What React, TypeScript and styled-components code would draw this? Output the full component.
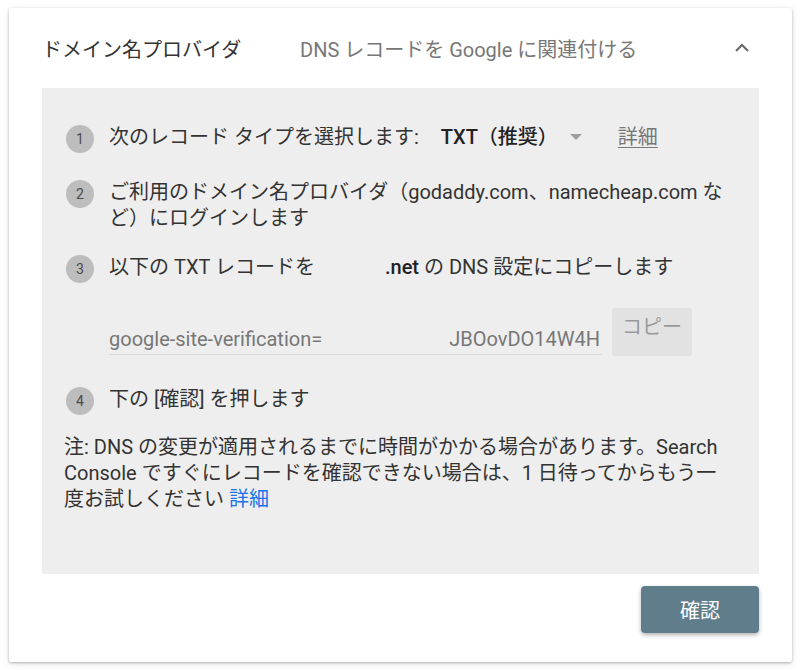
import styled, { createGlobalStyle } from "styled-components";

const GlobalStyle = createGlobalStyle`
  html, body {
    margin: 0;
    padding: 0;
    background: #ffffff;
  }
  body {
    font-family: Roboto, "Noto Sans CJK JP", sans-serif;
    color: #333333;
  }
`;

const Page = styled.div`
  padding: 8px 8px 8px 9px;
`;

const Card = styled.section`
  width: 783px;
  height: 654px;
  box-sizing: border-box;
  background: #ffffff;
  border-radius: 2px;
  box-shadow: 0 1px 3px rgba(0, 0, 0, 0.28), 0 2px 10px rgba(0, 0, 0, 0.08);
  padding: 0 33px;
  display: flex;
  flex-direction: column;
`;

const Header = styled.header`
  height: 80px;
  display: flex;
  align-items: center;
  font-size: 20px;
`;

const Title = styled.h2`
  margin: 0;
  width: 258px;
  font-size: 20px;
  font-weight: 400;
  color: #333333;
`;

const Subtitle = styled.span`
  flex: 1;
  color: #777777;
`;

const Chevron = styled.button`
  border: none;
  background: none;
  padding: 0;
  width: 18px;
  height: 18px;
  margin-right: 8px;
  display: flex;
  align-items: center;
  justify-content: center;
`;

const Panel = styled.div`
  height: 486px;
  box-sizing: border-box;
  background: #eeeeee;
  padding: 36px 22px 0 22px;
  font-size: 20px;
  line-height: 26px;
  color: #333333;
`;

const Step = styled.div<{ $gap?: number }>`
  display: flex;
  align-items: flex-start;
  margin-top: ${(p) => p.$gap ?? 0}px;
  padding-left: 2px;
`;

const Num = styled.span`
  flex: none;
  width: 28px;
  height: 28px;
  margin-top: 1px;
  margin-right: 15px;
  border-radius: 50%;
  background: #bdbdbd;
  color: #4a4a4a;
  font-size: 14px;
  line-height: 28px;
  text-align: center;
`;

const StepText = styled.div`
  white-space: nowrap;
`;

const Strong = styled.span`
  font-weight: 500;
  color: #222222;
`;

const TypeSelect = styled.span`
  display: inline-flex;
  align-items: center;
  margin-left: 22px;
`;

const Caret = styled.span`
  display: inline-block;
  width: 0;
  height: 0;
  margin: 0 36px 0 12px;
  border-left: 6px solid transparent;
  border-right: 6px solid transparent;
  border-top: 6px solid #9e9e9e;
`;

const MoreLink = styled.a`
  color: #777777;
  text-decoration: underline;
  text-underline-offset: 3px;
  text-decoration-thickness: 1px;
`;

const Hidden = styled.span`
  display: inline-block;
  width: 70px;
`;

const FieldRow = styled.div`
  display: flex;
  align-items: stretch;
  margin: 25px 0 0 45px;
  height: 48px;
`;

const Field = styled.div`
  width: 493px;
  overflow: hidden;
  border-bottom: 1px solid #d9d9d9;
  display: flex;
  align-items: flex-end;
  padding-bottom: 2px;
  box-sizing: border-box;
  white-space: nowrap;
  color: #777777;
  height: 47px;
`;

const FieldGap = styled.span`
  display: inline-block;
  width: 127px;
  flex: none;
`;

const CopyButton = styled.button`
  margin-left: 10px;
  width: 80px;
  border: none;
  border-radius: 3px;
  background: #e2e2e2;
  color: #9a9a9a;
  font-family: Roboto, "Noto Sans CJK JP", sans-serif;
  font-size: 20px;
  padding: 0 0 14px 0;
`;

const Note = styled.p`
  margin: 19px 0 0 0;
  white-space: nowrap;
`;

const BlueLink = styled.a`
  color: #1a73e8;
  text-decoration: none;
`;

const Footer = styled.div`
  display: flex;
  justify-content: flex-end;
  padding-top: 12px;
`;

const ConfirmButton = styled.button`
  width: 118px;
  height: 47px;
  border: none;
  border-radius: 4px;
  background: #607d8b;
  color: #ffffff;
  font-family: Roboto, "Noto Sans CJK JP", sans-serif;
  font-size: 20px;
  box-shadow: 0 2px 4px rgba(0, 0, 0, 0.3);
`;

export default function App() {
  return (
    <Page>
      <GlobalStyle />
      <Card>
        <Header>
          <Title>ドメイン名プロバイダ</Title>
          <Subtitle>DNS レコードを Google に関連付ける</Subtitle>
          <Chevron aria-label="閉じる">
            <svg width="16" height="10" viewBox="0 0 16 10">
              <polyline points="2,8 8,2 14,8" fill="none" stroke="#666" strokeWidth="2" />
            </svg>
          </Chevron>
        </Header>
        <Panel>
          <Step>
            <Num>1</Num>
            <StepText>
              次のレコード タイプを選択します:
              <TypeSelect>
                <Strong>TXT（推奨）</Strong>
                <Caret />
              </TypeSelect>
              <MoreLink>詳細</MoreLink>
            </StepText>
          </Step>
          <Step $gap={26}>
            <Num>2</Num>
            <StepText>
              ご利用のドメイン名プロバイダ（godaddy.com、namecheap.com な
              <br />
              ど）にログインします
            </StepText>
          </Step>
          <Step $gap={23}>
            <Num>3</Num>
            <StepText>
              以下の TXT レコードを
              <Hidden />
              <Strong>.net</Strong> の DNS 設定にコピーします
            </StepText>
          </Step>
          <FieldRow>
            <Field>
              google-site-verification=
              <FieldGap />
              JBOovDO14W4H
            </Field>
            <CopyButton>コピー</CopyButton>
          </FieldRow>
          <Step $gap={30}>
            <Num>4</Num>
            <StepText>下の [確認] を押します</StepText>
          </Step>
          <Note>
            注: DNS の変更が適用されるまでに時間がかかる場合があります。Search
            <br />
            Console ですぐにレコードを確認できない場合は、1 日待ってからもう一
            <br />
            度お試しください <BlueLink>詳細</BlueLink>
          </Note>
        </Panel>
        <Footer>
          <ConfirmButton>確認</ConfirmButton>
        </Footer>
      </Card>
    </Page>
  );
}
